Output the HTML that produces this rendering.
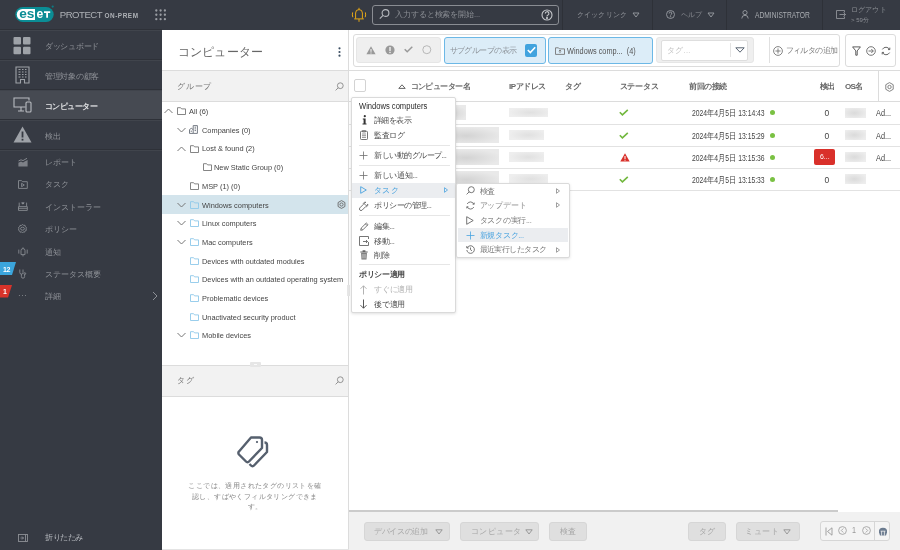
<!DOCTYPE html>
<html><head><meta charset="utf-8">
<style>
*{box-sizing:border-box;margin:0;padding:0}
html,body{width:900px;height:550px;overflow:hidden;background:#fff;font-family:"Liberation Sans",sans-serif;color:#333}
.a{position:absolute}
.t{position:absolute;white-space:nowrap;line-height:1}
#top{left:0;top:0;width:900px;height:30px;background:#363a43}
#side{left:0;top:30px;width:162px;height:520px;background:#363a43}
.cx{display:inline-block;transform-origin:0 50%;transform:scaleX(.86)}
.sep{position:absolute;background:#2e3138}
.stx{position:absolute;left:45px;font-size:7.5px;color:#8f9298;letter-spacing:0px;white-space:nowrap;line-height:1}
</style></head><body><div id="root" style="position:absolute;left:0;top:0;width:900px;height:550px;overflow:hidden;will-change:transform">

<div id="top" class="a">
  <div class="a" style="left:0;top:29px;width:162px;height:1px;background:#2e3138"></div>
  
  <svg class="a" style="left:15px;top:5px" width="42" height="18" viewBox="0 0 42 18">
    <rect x="0.3" y="2" width="38.4" height="15" rx="7.5" fill="#0b8d95"/>
    <path d="M7.3 4 H20 V15 H7.3 A5.5 5.5 0 0 1 7.3 4 Z" fill="#fff"/>
    <text x="4.2" y="12.8" font-family="Liberation Sans" font-weight="bold" font-size="12" fill="#0b8d95" textLength="15.2" lengthAdjust="spacingAndGlyphs">es</text>
    <text x="21.6" y="12.8" font-family="Liberation Sans" font-weight="bold" font-size="12" fill="#fff" textLength="6.8" lengthAdjust="spacingAndGlyphs">e</text>
    <path d="M29 6.3 H35.2 V7.9 H33 V12.8 H31.2 V7.9 H29 Z" fill="#fff"/>
    <circle cx="37.7" cy="1.6" r="1.1" fill="#0b7c84"/>
  </svg>
  <div class="t" style="left:59.8px;top:10.3px;font-size:9.6px;color:#aeb1b6;letter-spacing:-0.5px">PROTECT</div>
  <div class="t" style="left:104.5px;top:12.8px;font-size:6.4px;color:#aeb1b6;font-weight:bold;letter-spacing:0.55px">ON-PREM</div>
  <svg class="a" style="left:154.7px;top:9px" width="12" height="12" viewBox="0 0 12 12" fill="#9a9da3"><circle cx="1.3" cy="1.5" r="1.15"/><circle cx="5.6" cy="1.5" r="1.15"/><circle cx="9.9" cy="1.5" r="1.15"/><circle cx="1.3" cy="5.75" r="1.15"/><circle cx="5.6" cy="5.75" r="1.15"/><circle cx="9.9" cy="5.75" r="1.15"/><circle cx="1.3" cy="10.2" r="1.15"/><circle cx="5.6" cy="10.2" r="1.15"/><circle cx="9.9" cy="10.2" r="1.15"/></svg>
  
  <svg class="a" style="left:351px;top:7px" width="16" height="16" viewBox="0 0 16 16" fill="none" stroke="#f0ae14" stroke-width="0.95"><path d="M4.6 11.6 V6 A3.4 3.4 0 0 1 11.4 6 V11.6 M3.2 11.9 H12.8 M8 12 V14.8 M8 0.8 V2.6"/><path d="M1.6 5.4 Q1 8 1.8 10.2 M14.4 5.4 Q15 8 14.2 10.2"/></svg>
  
  <div class="a" style="left:372px;top:5px;width:187px;height:20px;border:1px solid #8a8d93;border-radius:3px"></div>
  <svg class="a" style="left:379px;top:8px" width="12" height="12" viewBox="0 0 12 12" fill="none" stroke="#b8bbc0" stroke-width="1.1"><circle cx="6.5" cy="5" r="3.4"/><path d="M4.1 7.4 L0.8 10.7"/></svg>
  <div class="t" style="left:395px;top:11px;font-size:7.5px;color:#8c8f95;letter-spacing:-0.1px">入力すると検索を開始...</div>
  <svg class="a" style="left:541px;top:9px" width="12" height="12" viewBox="0 0 12 12" fill="none" stroke="#c5c7cb" stroke-width="1.1"><circle cx="6" cy="6" r="5"/><path d="M4.3 4.6 A1.8 1.8 0 1 1 6.6 6.2 Q6 6.5 6 7.4"/><circle cx="6" cy="9.1" r="0.5" fill="#c5c7cb"/></svg>
  <div class="sep" style="left:562px;top:0;width:1px;height:30px"></div>
  <div class="t" style="left:576.5px;top:11px;font-size:7px;color:#8c8f95;letter-spacing:0.25px">クイックリンク</div>
  <svg class="a" style="left:632px;top:12px" width="8" height="6" viewBox="0 0 8 6" fill="none" stroke="#9a9da3" stroke-width="0.9"><path d="M1 1 H7 L4 5 Z"/></svg>
  <div class="sep" style="left:652px;top:0;width:1px;height:30px"></div>
  <svg class="a" style="left:666px;top:10px" width="9" height="9" viewBox="0 0 9 9" fill="none" stroke="#9a9da3" stroke-width="0.9"><circle cx="4.5" cy="4.5" r="4"/><path d="M3.2 3.5 A1.3 1.3 0 1 1 4.9 4.6 Q4.5 4.9 4.5 5.6"/><circle cx="4.5" cy="6.8" r="0.3"/></svg>
  <div class="t" style="left:681px;top:11px;font-size:7px;color:#8c8f95;letter-spacing:0px">ヘルプ</div>
  <svg class="a" style="left:707px;top:12px" width="8" height="6" viewBox="0 0 8 6" fill="none" stroke="#9a9da3" stroke-width="0.9"><path d="M1 1 H7 L4 5 Z"/></svg>
  <div class="sep" style="left:726px;top:0;width:1px;height:30px"></div>
  <svg class="a" style="left:741px;top:10px" width="8" height="9" viewBox="0 0 8 9" fill="none" stroke="#9a9da3" stroke-width="0.9"><circle cx="4" cy="2.6" r="2.1"/><path d="M0.8 8.5 Q0.8 5.3 4 5.3 Q7.2 5.3 7.2 8.5"/></svg>
  <div class="t" style="left:755px;top:10.5px;font-size:8.7px;color:#a9acb1"><span class="cx" style="transform:scaleX(.77)">ADMINISTRATOR</span></div>
  <div class="sep" style="left:822px;top:0;width:1px;height:30px"></div>
  <svg class="a" style="left:835.5px;top:10px" width="10" height="9" viewBox="0 0 10 9" fill="none" stroke="#9a9da3" stroke-width="0.8"><path d="M8.5 2.5 V0.5 H0.5 V8.5 H8.5 V6.5 M3.5 4.5 H9.5 M7.5 2.5 L9.5 4.5 L7.5 6.5"/></svg>
  <div class="t" style="left:851px;top:6.3px;font-size:7px;color:#8c8f95;letter-spacing:0.15px">ログアウト</div>
  <div class="t" style="left:851px;top:16.8px;font-size:6px;color:#8c8f95">&gt; 59分</div>
</div>


<div id="side" class="a">
  <div class="a" style="left:0;top:60px;width:162px;height:29px;background:#464a52"></div>
  <div class="sep" style="left:0;top:29px;width:162px;height:1px"></div>
  <div class="sep" style="left:0;top:59px;width:162px;height:1px"></div>
  <div class="sep" style="left:0;top:89px;width:162px;height:1px"></div>
  <div class="sep" style="left:0;top:119px;width:162px;height:1px"></div>
  <div class="a" style="left:0;top:0px;width:162px;height:1px;background:#40444c"></div>
  <div class="a" style="left:0;top:30px;width:162px;height:1px;background:#40444c"></div>
  <div class="a" style="left:0;top:60px;width:162px;height:1px;background:#40444c"></div>
  <div class="a" style="left:0;top:90px;width:162px;height:1px;background:#40444c"></div>
  <div class="a" style="left:0;top:120px;width:162px;height:1px;background:#40444c"></div>

  
  <svg class="a" style="left:13px;top:7px" width="19" height="18" viewBox="0 0 19 18" fill="#9ea2a8"><rect x="0.5" y="0" width="7.5" height="7.5" rx="1"/><rect x="10" y="0" width="7.5" height="7.5" rx="1"/><rect x="0.5" y="9.7" width="7.5" height="7.5" rx="1"/><rect x="10" y="9.7" width="7.5" height="7.5" rx="1"/></svg>
  <div class="stx" style="top:12.7px;letter-spacing:-0.3px">ダッシュボード</div>
  <svg class="a" style="left:15px;top:36px" width="15" height="18" viewBox="0 0 15 18" fill="none" stroke="#9ea2a8" stroke-width="1.1"><path d="M1 17 V1 H14 V17 H9.5 V13.5 H5.5 V17 Z"/><path d="M3.5 3.5h2M7 3.5h1.5M10 3.5h1.5M3.5 6h2M7 6h1.5M10 6h1.5M3.5 8.5h2M7 8.5h1.5M10 8.5h1.5M3.5 11h2M7 11h1.5M10 11h1.5" stroke-width="1.2"/></svg>
  <div class="stx" style="top:42.7px;letter-spacing:-0.3px">管理対象の顧客</div>
  <svg class="a" style="left:13px;top:67px" width="19" height="16" viewBox="0 0 19 16" fill="none" stroke="#b9bcc1" stroke-width="1.1"><path d="M12.5 10 H1 V1 H16 V3.5 M5 14 H11 M8 10 V14"/><rect x="13" y="5" width="5" height="10" rx="1"/></svg>
  <div class="stx" style="top:72.7px;color:#e6e7e9;font-weight:bold;letter-spacing:-0.55px">コンピューター</div>
  <svg class="a" style="left:13px;top:96px" width="19" height="17" viewBox="0 0 19 17"><path d="M9.5 0.5 L18.5 16.5 H0.5 Z" fill="#9ea2a8"/><rect x="8.6" y="5.5" width="1.8" height="6" fill="#363a43"/><rect x="8.6" y="12.8" width="1.8" height="1.8" fill="#363a43"/></svg>
  <div class="stx" style="top:102.7px">検出</div>
  <svg class="a" style="left:17.5px;top:127.5px" width="10" height="9" viewBox="0 0 10 9"><path d="M0.5 3 L3 1.8 L5 2.6 L9 0.3" fill="none" stroke="#8d9096" stroke-width="0.9"/><path d="M0.4 8.4 V4.8 L3 3.4 L5 4.4 L7 3.2 L9.6 2 V8.4 Z" fill="#7d8087"/></svg>
  <div class="stx" style="top:128.7px">レポート</div>
  <svg class="a" style="left:17.8px;top:149.5px" width="10" height="9" viewBox="0 0 10 9" fill="none" stroke="#8d9096" stroke-width="0.85"><path d="M0.5 0.6 H3.5 L4.5 1.7 H9.3 V8.4 H0.5 Z M3.6 3.3 L6.3 5 L3.6 6.7 Z"/></svg>
  <div class="stx" style="top:150.7px">タスク</div>
  <svg class="a" style="left:17.8px;top:172px" width="10" height="9" viewBox="0 0 10 9" fill="none" stroke="#8d9096" stroke-width="0.85"><path d="M1.2 4.2 V0.6 M8.6 4.2 V0.6 M0.5 4.6 H9.3 V8.4 H0.5 Z M0.5 6.3 H9.3"/><path d="M3.6 0.8 H6.2 L4.9 2.2 Z" fill="#8d9096"/></svg>
  <div class="stx" style="top:173.7px">インストーラー</div>
  <svg class="a" style="left:17.8px;top:193.8px" width="9" height="9" viewBox="0 0 9 9" fill="none" stroke="#8d9096" stroke-width="0.85"><path d="M4.5 0.5 L5.6 1.3 L7 1.3 L7.3 2.7 L8.5 3.6 L8 4.9 L8.4 6.3 L7.1 6.9 L6.5 8.2 L5.1 8 L4.5 8.6 L3.6 8 L2.2 8.2 L1.7 6.9 L0.5 6.2 L0.9 4.8 L0.5 3.5 L1.6 2.8 L2 1.4 L3.4 1.4 Z"/><ellipse cx="4.5" cy="4.7" rx="1.9" ry="1.5"/></svg>
  <div class="stx" style="top:195.7px">ポリシー</div>
  <svg class="a" style="left:17.8px;top:216.5px" width="10" height="10" viewBox="0 0 10 10" fill="none" stroke="#8d9096" stroke-width="0.85"><path d="M3 7.6 V3.6 A2 2 0 0 1 7 3.6 V7.6 Z M5 0.4 V1.6 M4.3 8.8 H5.7 M0.8 2.6 V6.6 M9.2 2.6 V6.6"/></svg>
  <div class="stx" style="top:218.7px">通知</div>
  <svg class="a" style="left:19px;top:238.5px" width="8" height="10" viewBox="0 0 8 10" fill="none" stroke="#8d9096" stroke-width="0.85"><path d="M0.8 0.5 V3.5 A1.6 1.6 0 0 0 4 3.5 V0.5 M2.4 5.1 V7.6 A1.6 1.6 0 0 0 5.6 7.6 V5.6"/><circle cx="5.8" cy="4.6" r="0.9"/></svg>
  <div class="stx" style="top:240.7px">ステータス概要</div>
  <div class="t" style="left:18px;top:262px;font-size:8px;color:#8d9096;letter-spacing:0.5px">···</div>
  <div class="stx" style="top:262.7px">詳細</div>
  <svg class="a" style="left:152px;top:261px" width="6" height="10" viewBox="0 0 6 10" fill="none" stroke="#8d9096" stroke-width="1"><path d="M1 1 L5 5 L1 9"/></svg>
  
  <svg class="a" style="left:0;top:232px" width="16" height="13" viewBox="0 0 16 13"><path d="M0 0 H16 L12 13 H0 Z" fill="#3ba5dc"/></svg>
  <div class="t" style="left:3px;top:235.5px;font-size:7px;color:#fff;font-weight:bold;letter-spacing:-0.3px">12</div>
  <svg class="a" style="left:0;top:255px" width="13" height="12.5" viewBox="0 0 13 12.5"><path d="M0 0 H12 L8 12.5 H0 Z" fill="#d8332a"/></svg>
  <div class="t" style="left:3px;top:257.5px;font-size:7px;color:#fff;font-weight:bold">1</div>
  <svg class="a" style="left:18px;top:504px" width="10" height="8" viewBox="0 0 10 8" fill="none" stroke="#8d9096" stroke-width="0.9"><rect x="0.5" y="0.5" width="9" height="7"/><path d="M7.5 0.5 V7.5 M2.5 4 H5.5 M4 2.5 L5.5 4 L4 5.5"/></svg>
  <div class="stx" style="top:503.7px;color:#b9bcc1;letter-spacing:-0.5px">折りたたみ</div>
</div>


<div class="a" style="left:162px;top:30px;width:187px;height:520px;background:#fff;border-right:1px solid #dcdcdc">
  <div class="t" style="left:16px;top:16px;font-size:12px;color:#666;letter-spacing:0.15px">コンピューター</div>
  <svg class="a" style="left:176px;top:17px" width="3" height="10" viewBox="0 0 3 10" fill="#3d4f63"><circle cx="1.5" cy="1.3" r="1.1"/><circle cx="1.5" cy="5" r="1.1"/><circle cx="1.5" cy="8.7" r="1.1"/></svg>
  <div class="a" style="left:0;top:40px;width:186px;height:32px;background:#f2f2f2;border-top:1px solid #dcdcdc;border-bottom:1px solid #dcdcdc"></div>
  <div class="t" style="left:15px;top:52.8px;font-size:8px;color:#777;letter-spacing:0.8px">グループ</div>
  <svg class="a" style="left:2.4px;top:78.1px" width="9" height="6" viewBox="0 0 9 6" fill="none" stroke="#777" stroke-width="1"><path d="M0.5 5 L4.5 1 L8.5 5"/></svg>
  <svg class="a" style="left:15.3px;top:77.1px" width="9" height="8" viewBox="0 0 9 8" fill="none" stroke="#777" stroke-width="0.9"><path d="M0.5 0.7 H3.6 L4.6 1.9 H8.5 V7.5 H0.5 Z"/></svg>
  <div class="t" style="left:27.0px;top:78.0px;font-size:8.1px;color:#444"><span class="cx" style="transform:scaleX(.915)">All (6)</span></div>
  <svg class="a" style="left:15.0px;top:96.8px" width="9" height="6" viewBox="0 0 9 6" fill="none" stroke="#777" stroke-width="1"><path d="M0.5 1 L4.5 5 L8.5 1"/></svg>
  <svg class="a" style="left:27.3px;top:95.3px" width="9" height="9" viewBox="0 0 9 9" fill="none" stroke="#5f6670" stroke-width="0.85"><path d="M4.2 8.4 V0.6 H8.4 V8.4 Z M5.6 2.2 H7 M5.6 3.9 H7 M5.6 5.6 H7 M0.5 8.4 V4.6 L2.3 3.3 L4.2 4.6 M0.5 8.4 H4.2 M1.6 6.2 H3"/></svg>
  <div class="t" style="left:39.6px;top:96.7px;font-size:8.1px;color:#444"><span class="cx" style="transform:scaleX(.915)">Companies (0)</span></div>
  <svg class="a" style="left:15.0px;top:115.5px" width="9" height="6" viewBox="0 0 9 6" fill="none" stroke="#777" stroke-width="1"><path d="M0.5 5 L4.5 1 L8.5 5"/></svg>
  <svg class="a" style="left:27.9px;top:114.5px" width="9" height="8" viewBox="0 0 9 8" fill="none" stroke="#777" stroke-width="0.9"><path d="M0.5 0.7 H3.6 L4.6 1.9 H8.5 V7.5 H0.5 Z"/></svg>
  <div class="t" style="left:39.6px;top:115.4px;font-size:8.1px;color:#444"><span class="cx" style="transform:scaleX(.915)">Lost &amp; found (2)</span></div>
  <svg class="a" style="left:40.5px;top:133.2px" width="9" height="8" viewBox="0 0 9 8" fill="none" stroke="#777" stroke-width="0.9"><path d="M0.5 0.7 H3.6 L4.6 1.9 H8.5 V7.5 H0.5 Z"/></svg>
  <div class="t" style="left:52.2px;top:134.1px;font-size:8.1px;color:#444"><span class="cx" style="transform:scaleX(.915)">New Static Group (0)</span></div>
  <svg class="a" style="left:27.9px;top:151.9px" width="9" height="8" viewBox="0 0 9 8" fill="none" stroke="#777" stroke-width="0.9"><path d="M0.5 0.7 H3.6 L4.6 1.9 H8.5 V7.5 H0.5 Z"/></svg>
  <div class="t" style="left:39.6px;top:152.8px;font-size:8.1px;color:#444"><span class="cx" style="transform:scaleX(.915)">MSP (1) (0)</span></div>
  <div class="a" style="left:0;top:165.2px;width:186px;height:18.5px;background:#d3e4ec"></div>
  <svg class="a" style="left:174.5px;top:170.1px" width="9" height="9" viewBox="0 0 9 9" fill="none" stroke="#666" stroke-width="0.9"><path d="M4.5 0.6 L7.9 2.5 V6.5 L4.5 8.4 L1.1 6.5 V2.5 Z"/><circle cx="4.5" cy="4.5" r="1.6"/></svg>
  <svg class="a" style="left:15.0px;top:171.6px" width="9" height="6" viewBox="0 0 9 6" fill="none" stroke="#777" stroke-width="1"><path d="M0.5 1 L4.5 5 L8.5 1"/></svg>
  <svg class="a" style="left:27.9px;top:170.6px" width="9" height="8" viewBox="0 0 9 8" fill="none" stroke="#8fc8ea" stroke-width="0.9"><path d="M0.5 0.7 H3.6 L4.6 1.9 H8.5 V7.5 H0.5 Z"/></svg>
  <div class="t" style="left:39.6px;top:171.5px;font-size:8.1px;color:#444"><span class="cx" style="transform:scaleX(.915)">Windows computers</span></div>
  <svg class="a" style="left:15.0px;top:190.2px" width="9" height="6" viewBox="0 0 9 6" fill="none" stroke="#777" stroke-width="1"><path d="M0.5 1 L4.5 5 L8.5 1"/></svg>
  <svg class="a" style="left:27.9px;top:189.2px" width="9" height="8" viewBox="0 0 9 8" fill="none" stroke="#8fc8ea" stroke-width="0.9"><path d="M0.5 0.7 H3.6 L4.6 1.9 H8.5 V7.5 H0.5 Z"/></svg>
  <div class="t" style="left:39.6px;top:190.1px;font-size:8.1px;color:#444"><span class="cx" style="transform:scaleX(.915)">Linux computers</span></div>
  <svg class="a" style="left:15.0px;top:208.9px" width="9" height="6" viewBox="0 0 9 6" fill="none" stroke="#777" stroke-width="1"><path d="M0.5 1 L4.5 5 L8.5 1"/></svg>
  <svg class="a" style="left:27.9px;top:207.9px" width="9" height="8" viewBox="0 0 9 8" fill="none" stroke="#8fc8ea" stroke-width="0.9"><path d="M0.5 0.7 H3.6 L4.6 1.9 H8.5 V7.5 H0.5 Z"/></svg>
  <div class="t" style="left:39.6px;top:208.8px;font-size:8.1px;color:#444"><span class="cx" style="transform:scaleX(.915)">Mac computers</span></div>
  <svg class="a" style="left:27.9px;top:226.6px" width="9" height="8" viewBox="0 0 9 8" fill="none" stroke="#8fc8ea" stroke-width="0.9"><path d="M0.5 0.7 H3.6 L4.6 1.9 H8.5 V7.5 H0.5 Z"/></svg>
  <div class="t" style="left:39.6px;top:227.5px;font-size:8.1px;color:#444"><span class="cx" style="transform:scaleX(.915)">Devices with outdated modules</span></div>
  <svg class="a" style="left:27.9px;top:245.3px" width="9" height="8" viewBox="0 0 9 8" fill="none" stroke="#8fc8ea" stroke-width="0.9"><path d="M0.5 0.7 H3.6 L4.6 1.9 H8.5 V7.5 H0.5 Z"/></svg>
  <div class="t" style="left:39.6px;top:246.2px;font-size:8.1px;color:#444"><span class="cx" style="transform:scaleX(.915)">Devices with an outdated operating system</span></div>
  <svg class="a" style="left:27.9px;top:264.0px" width="9" height="8" viewBox="0 0 9 8" fill="none" stroke="#8fc8ea" stroke-width="0.9"><path d="M0.5 0.7 H3.6 L4.6 1.9 H8.5 V7.5 H0.5 Z"/></svg>
  <div class="t" style="left:39.6px;top:264.9px;font-size:8.1px;color:#444"><span class="cx" style="transform:scaleX(.915)">Problematic devices</span></div>
  <svg class="a" style="left:27.9px;top:282.7px" width="9" height="8" viewBox="0 0 9 8" fill="none" stroke="#8fc8ea" stroke-width="0.9"><path d="M0.5 0.7 H3.6 L4.6 1.9 H8.5 V7.5 H0.5 Z"/></svg>
  <div class="t" style="left:39.6px;top:283.6px;font-size:8.1px;color:#444"><span class="cx" style="transform:scaleX(.915)">Unactivated security product</span></div>
  <svg class="a" style="left:15.0px;top:302.4px" width="9" height="6" viewBox="0 0 9 6" fill="none" stroke="#777" stroke-width="1"><path d="M0.5 1 L4.5 5 L8.5 1"/></svg>
  <svg class="a" style="left:27.9px;top:301.4px" width="9" height="8" viewBox="0 0 9 8" fill="none" stroke="#8fc8ea" stroke-width="0.9"><path d="M0.5 0.7 H3.6 L4.6 1.9 H8.5 V7.5 H0.5 Z"/></svg>
  <div class="t" style="left:39.6px;top:302.3px;font-size:8.1px;color:#444"><span class="cx" style="transform:scaleX(.915)">Mobile devices</span></div>
  <svg class="a" style="left:173px;top:52px" width="9" height="9" viewBox="0 0 9 9" fill="none" stroke="#888" stroke-width="0.9"><circle cx="5.3" cy="3.7" r="2.9"/><path d="M3.2 5.8 L0.6 8.4"/></svg>
</div>


<div class="a" style="left:349px;top:30px;width:551px;height:520px;background:#fff">
  
  <div class="a" style="left:4px;top:4.2px;width:487px;height:32.6px;border:1px solid #dcdcdc;border-radius:3px;background:#fff"></div>
  <div class="a" style="left:7px;top:7px;width:85px;height:26px;background:#efefef;border-radius:3px;border:1px solid #e6e6e6"></div>
  <svg class="a" style="left:17px;top:15.8px" width="10" height="9" viewBox="0 0 10 9"><path d="M5 0.2 L9.6 8.2 H0.4 Z" fill="#999"/><rect x="4.45" y="3" width="1.1" height="2.8" fill="#efefef"/><rect x="4.45" y="6.5" width="1.1" height="1" fill="#efefef"/></svg>
  <svg class="a" style="left:35.5px;top:14.7px" width="10" height="10" viewBox="0 0 10 10"><circle cx="5" cy="5" r="4.6" fill="#999"/><rect x="4.3" y="2" width="1.4" height="4" fill="#efefef"/><rect x="4.3" y="6.8" width="1.4" height="1.3" fill="#efefef"/></svg>
  <svg class="a" style="left:54.5px;top:16.4px" width="9" height="7" viewBox="0 0 9 7" fill="none" stroke="#999" stroke-width="1.5"><path d="M0.7 3.3 L3.2 5.8 L8.3 0.7"/></svg>
  <svg class="a" style="left:72.5px;top:15px" width="10" height="10" viewBox="0 0 10 10" fill="none" stroke="#aaa" stroke-width="0.8"><circle cx="4.8" cy="4.7" r="4"/></svg>
  <div class="a" style="left:95px;top:7px;width:102px;height:26.5px;background:#dcedf8;border:1px solid #6cb8e6;border-radius:3px"></div>
  <div class="t" style="left:100.5px;top:17px;font-size:7.5px;color:#8c9298;letter-spacing:-0.55px">サブグループの表示</div>
  <div class="a" style="left:176px;top:14px;width:12px;height:12.5px;background:#41a3de;border-radius:2px"></div>
  <svg class="a" style="left:177.5px;top:16px" width="9" height="8" viewBox="0 0 9 8" fill="none" stroke="#fff" stroke-width="1.6"><path d="M0.8 4 L3.3 6.5 L8.2 1.2"/></svg>
  <div class="a" style="left:199px;top:7px;width:105px;height:26.5px;background:#dcedf8;border:1px solid #6cb8e6;border-radius:3px"></div>
  <svg class="a" style="left:205.5px;top:17px" width="10" height="8" viewBox="0 0 10 8" fill="none" stroke="#777" stroke-width="0.9"><path d="M0.5 0.8 H3.5 L4.5 1.9 H9.5 V7.4 H0.5 Z M5 3 V6 M3.8 4.2 L5 3 L6.2 4.2"/></svg>
  <div class="t" style="left:217.5px;top:17px;font-size:8.5px;color:#555"><span class="cx">Windows comp...&nbsp; (4)</span></div>
  <div class="a" style="left:307px;top:7px;width:98px;height:26px;background:#efefef;border-radius:3px;border:1px solid #e6e6e6"></div>
  <div class="a" style="left:312px;top:10px;width:86.5px;height:20.5px;background:#fff;border:1px solid #dedede;border-radius:2px"></div>
  <div class="t" style="left:318px;top:17px;font-size:7.5px;color:#c4c4c4;letter-spacing:0.3px">タグ...</div>
  <div class="a" style="left:380.5px;top:13px;width:1px;height:14px;background:#e3e3e3"></div>
  <svg class="a" style="left:385.5px;top:17.3px" width="10" height="6" viewBox="0 0 10 6" fill="none" stroke="#5a6573" stroke-width="1"><path d="M0.8 0.8 H9.2 L5 5.2 Z"/></svg>
  <div class="a" style="left:420px;top:7px;width:1px;height:26px;background:#e0e0e0"></div>
  <svg class="a" style="left:424px;top:15.5px" width="10" height="10" viewBox="0 0 10 10" fill="none" stroke="#777" stroke-width="0.9"><circle cx="5" cy="5" r="4.4"/><path d="M5 2.4 V7.6 M2.4 5 H7.6"/></svg>
  <div class="t" style="left:436.5px;top:16.5px;font-size:7.5px;color:#7a7a7a;letter-spacing:-0.6px">フィルタの追加</div>
  
  <div class="a" style="left:496px;top:4.2px;width:50.5px;height:32.6px;border:1px solid #dcdcdc;border-radius:3px;background:#fff"></div>
  <svg class="a" style="left:502.5px;top:15.5px" width="9" height="10" viewBox="0 0 9 10" fill="none" stroke="#555" stroke-width="0.95"><path d="M0.6 0.9 H8.4 L5.2 4.9 V9.2 H3.8 V4.9 Z"/></svg>
  <svg class="a" style="left:517px;top:15.5px" width="10" height="10" viewBox="0 0 10 10" fill="none" stroke="#666" stroke-width="0.9"><circle cx="5" cy="5" r="4.3"/><path d="M2.5 5 H7.3 M5.3 3 L7.3 5 L5.3 7"/></svg>
  <svg class="a" style="left:532px;top:15.5px" width="10" height="10" viewBox="0 0 10 10" fill="none" stroke="#666" stroke-width="1"><path d="M8.6 3.6 A4 4 0 0 0 1.4 3.4 M1.4 6.4 A4 4 0 0 0 8.6 6.6 M7 3.6 H8.8 V1.6 M3 6.4 H1.2 V8.4"/></svg>
  
  <div class="a" style="left:0;top:40px;width:551px;height:1px;background:#dcdcdc"></div>
  <div class="a" style="left:0;top:71px;width:551px;height:1px;background:#dcdcdc"></div>
  <div class="a" style="left:4.8px;top:49.3px;width:12px;height:12.5px;border:1px solid #d3d3d3;border-radius:2px;background:#fff"></div>
  <svg class="a" style="left:49px;top:53.5px" width="8" height="5" viewBox="0 0 8 5" fill="none" stroke="#555" stroke-width="0.9"><path d="M0.8 4.4 H7.2 L4 0.8 Z"/></svg>
  <div class="t" style="left:61.5px;top:53px;font-size:7.5px;color:#666;font-weight:bold;letter-spacing:-0.55px">コンピューター名</div>
  <div class="t" style="left:160px;top:53px;font-size:8px;color:#666;font-weight:bold;letter-spacing:-0.45px">IPアドレス</div>
  <div class="t" style="left:216px;top:53px;font-size:8px;color:#666;font-weight:bold;letter-spacing:-0.25px">タグ</div>
  <div class="t" style="left:270.5px;top:53px;font-size:8px;color:#666;font-weight:bold;letter-spacing:-0.25px">ステータス</div>
  <div class="t" style="left:340px;top:53px;font-size:8px;color:#666;font-weight:bold;letter-spacing:-0.45px">前回の接続</div>
  <div class="t" style="left:471px;top:53px;font-size:8px;color:#666;font-weight:bold;letter-spacing:-0.75px">検出</div>
  <div class="t" style="left:496px;top:53px;font-size:8px;color:#666;font-weight:bold;letter-spacing:-0.75px">OS名</div>
  <div class="a" style="left:528.5px;top:41px;width:1px;height:30px;background:#dcdcdc"></div>
  <svg class="a" style="left:536px;top:51.5px" width="9" height="10" viewBox="0 0 9 10" fill="none" stroke="#777" stroke-width="0.9"><path d="M4.5 0.6 L8.2 2.7 V7.3 L4.5 9.4 L0.8 7.3 V2.7 Z"/><circle cx="4.5" cy="5" r="1.7"/></svg>
<div class="a" style="left:0;top:93.8px;width:551px;height:1px;background:#e2e2e2"></div>
  <div class="a" style="left:90px;top:74.8px;width:27.0px;height:15.6px;background:radial-gradient(ellipse 60% 55% at 45% 55%,#d3d3d3,#e9e9e9)"></div>
  <div class="a" style="left:159.9px;top:77.8px;width:39.1px;height:9.6px;background:radial-gradient(ellipse 55% 60% at 55% 50%,#e0e0e0,#eeeeee)"></div>
  <svg class="a" style="left:269.7px;top:79.4px" width="10" height="7" viewBox="0 0 10 7" fill="none" stroke="#72b83e" stroke-width="1.6"><path d="M0.8 3.3 L3.4 5.9 L8.8 0.8"/></svg>
  <div class="t" style="left:342.5px;top:79.3px;font-size:8.5px;color:#444"><span class="cx" style="transform:scaleX(.8)">2024年4月5日 13:14:43</span></div>
  <div class="a" style="left:421.3px;top:80.3px;width:5px;height:5px;border-radius:50%;background:#7ac143"></div>
  <div class="t" style="left:475.5px;top:79.3px;font-size:8.5px;color:#444">0</div>
  <div class="a" style="left:495.8px;top:77.7px;width:21px;height:10px;background:radial-gradient(ellipse 60% 60% at 45% 50%,#dadada,#ededed)"></div>
  <div class="t" style="left:526.5px;top:79.3px;font-size:8.5px;color:#444"><span class="cx">Ad...</span></div>
  <div class="a" style="left:0;top:116.0px;width:551px;height:1px;background:#e2e2e2"></div>
  <div class="a" style="left:90px;top:97.0px;width:60.0px;height:15.6px;background:radial-gradient(ellipse 60% 55% at 45% 55%,#d3d3d3,#e9e9e9)"></div>
  <div class="a" style="left:159.9px;top:100.0px;width:35.4px;height:9.6px;background:radial-gradient(ellipse 55% 60% at 55% 50%,#e0e0e0,#eeeeee)"></div>
  <svg class="a" style="left:269.7px;top:101.6px" width="10" height="7" viewBox="0 0 10 7" fill="none" stroke="#72b83e" stroke-width="1.6"><path d="M0.8 3.3 L3.4 5.9 L8.8 0.8"/></svg>
  <div class="t" style="left:342.5px;top:101.5px;font-size:8.5px;color:#444"><span class="cx" style="transform:scaleX(.8)">2024年4月5日 13:15:29</span></div>
  <div class="a" style="left:421.3px;top:102.5px;width:5px;height:5px;border-radius:50%;background:#7ac143"></div>
  <div class="t" style="left:475.5px;top:101.5px;font-size:8.5px;color:#444">0</div>
  <div class="a" style="left:495.8px;top:99.9px;width:21px;height:10px;background:radial-gradient(ellipse 60% 60% at 45% 50%,#dadada,#ededed)"></div>
  <div class="t" style="left:526.5px;top:101.5px;font-size:8.5px;color:#444"><span class="cx">Ad...</span></div>
  <div class="a" style="left:0;top:138.2px;width:551px;height:1px;background:#e2e2e2"></div>
  <div class="a" style="left:90px;top:119.2px;width:60.0px;height:15.6px;background:radial-gradient(ellipse 60% 55% at 45% 55%,#d3d3d3,#e9e9e9)"></div>
  <div class="a" style="left:159.9px;top:122.2px;width:35.4px;height:9.6px;background:radial-gradient(ellipse 55% 60% at 55% 50%,#e0e0e0,#eeeeee)"></div>
  <svg class="a" style="left:270.5px;top:122.6px" width="10" height="9" viewBox="0 0 10 9"><path d="M5 0.2 L9.7 8.6 H0.3 Z" fill="#d9302a"/><rect x="4.5" y="3" width="1" height="3" fill="#fff"/><rect x="4.5" y="6.7" width="1" height="1" fill="#fff"/></svg>
  <div class="t" style="left:342.5px;top:123.7px;font-size:8.5px;color:#444"><span class="cx" style="transform:scaleX(.8)">2024年4月5日 13:15:36</span></div>
  <div class="a" style="left:421.3px;top:124.7px;width:5px;height:5px;border-radius:50%;background:#7ac143"></div>
  <div class="a" style="left:464.5px;top:119.1px;width:21px;height:16px;background:#d9302a;border-radius:2px"></div>
  <div class="t" style="left:470.5px;top:123.1px;font-size:8px;color:#fff"><span class="cx">6...</span></div>
  <div class="a" style="left:495.8px;top:122.1px;width:21px;height:10px;background:radial-gradient(ellipse 60% 60% at 45% 50%,#dadada,#ededed)"></div>
  <div class="t" style="left:526.5px;top:123.7px;font-size:8.5px;color:#444"><span class="cx">Ad...</span></div>
  <div class="a" style="left:0;top:160.4px;width:551px;height:1px;background:#e2e2e2"></div>
  <div class="a" style="left:90px;top:141.4px;width:60.0px;height:15.6px;background:radial-gradient(ellipse 60% 55% at 45% 55%,#d3d3d3,#e9e9e9)"></div>
  <div class="a" style="left:159.9px;top:144.4px;width:39.1px;height:9.6px;background:radial-gradient(ellipse 55% 60% at 55% 50%,#e0e0e0,#eeeeee)"></div>
  <svg class="a" style="left:269.7px;top:146.0px" width="10" height="7" viewBox="0 0 10 7" fill="none" stroke="#72b83e" stroke-width="1.6"><path d="M0.8 3.3 L3.4 5.9 L8.8 0.8"/></svg>
  <div class="t" style="left:342.5px;top:145.9px;font-size:8.5px;color:#444"><span class="cx" style="transform:scaleX(.8)">2024年4月5日 13:15:33</span></div>
  <div class="a" style="left:421.3px;top:146.9px;width:5px;height:5px;border-radius:50%;background:#7ac143"></div>
  <div class="t" style="left:475.5px;top:145.9px;font-size:8.5px;color:#444">0</div>
  <div class="a" style="left:495.8px;top:144.3px;width:21px;height:10px;background:radial-gradient(ellipse 60% 60% at 45% 50%,#dadada,#ededed)"></div>
  
  <div class="a" style="left:0;top:479.5px;width:489px;height:2px;background:#cbcbcb"></div>
  <div class="a" style="left:0;top:482px;width:551px;height:38px;background:#f1f1f1"></div>
  <div class="a" style="left:15px;top:491.5px;width:86px;height:19px;background:#dfdfdf;border:1px solid #d6d6d6;border-radius:3px"></div>
  <div class="t" style="left:25px;top:498px;font-size:7.5px;color:#a6a6a6;letter-spacing:-0.35px">デバイスの追加</div>
  <svg class="a" style="left:86px;top:498.5px" width="8" height="6" viewBox="0 0 8 6" fill="none" stroke="#999" stroke-width="1"><path d="M0.8 0.8 H7.2 L4 5 Z"/></svg>
  <div class="a" style="left:111px;top:491.5px;width:78.5px;height:19px;background:#dfdfdf;border:1px solid #d6d6d6;border-radius:3px"></div>
  <div class="t" style="left:122px;top:498px;font-size:7.5px;color:#a6a6a6;letter-spacing:0.4px">コンピュータ</div>
  <svg class="a" style="left:176px;top:498.5px" width="8" height="6" viewBox="0 0 8 6" fill="none" stroke="#999" stroke-width="1"><path d="M0.8 0.8 H7.2 L4 5 Z"/></svg>
  <div class="a" style="left:200px;top:491.5px;width:37.5px;height:19px;background:#dfdfdf;border:1px solid #d6d6d6;border-radius:3px"></div>
  <div class="t" style="left:211px;top:498px;font-size:7.5px;color:#a6a6a6">検査</div>
  <div class="a" style="left:339px;top:491.5px;width:37.5px;height:19px;background:#dfdfdf;border:1px solid #d6d6d6;border-radius:3px"></div>
  <div class="t" style="left:350px;top:498px;font-size:7.5px;color:#a6a6a6">タグ</div>
  <div class="a" style="left:387px;top:491.5px;width:63.5px;height:19px;background:#dfdfdf;border:1px solid #d6d6d6;border-radius:3px"></div>
  <div class="t" style="left:396px;top:498px;font-size:7.5px;color:#a6a6a6;letter-spacing:0.6px">ミュート</div>
  <svg class="a" style="left:434px;top:498.5px" width="8" height="6" viewBox="0 0 8 6" fill="none" stroke="#999" stroke-width="1"><path d="M0.8 0.8 H7.2 L4 5 Z"/></svg>
  <div class="a" style="left:471px;top:491px;width:69.5px;height:19.5px;background:#f4f4f4;border:1px solid #d6d6d6;border-radius:3px"></div>
  <div class="a" style="left:525px;top:492px;width:1px;height:18px;background:#d6d6d6"></div>
  <svg class="a" style="left:476px;top:496.5px" width="8" height="9" viewBox="0 0 8 9" fill="none" stroke="#999" stroke-width="0.9"><path d="M1 0.5 V8.5 M7 0.8 L2.5 4.5 L7 8.2 Z"/></svg>
  <svg class="a" style="left:489px;top:496.3px" width="9" height="9" viewBox="0 0 9 9" fill="none" stroke="#999" stroke-width="0.8"><circle cx="4.5" cy="4.5" r="3.9"/><path d="M5.3 2.5 L3.3 4.5 L5.3 6.5"/></svg>
  <div class="t" style="left:502.5px;top:496.3px;font-size:9px;color:#999"><span class="cx" style="transform:scaleX(.8)">1</span></div>
  <svg class="a" style="left:512.5px;top:496.3px" width="9" height="9" viewBox="0 0 9 9" fill="none" stroke="#999" stroke-width="0.8"><circle cx="4.5" cy="4.5" r="3.9"/><path d="M3.7 2.5 L5.7 4.5 L3.7 6.5"/></svg>
  <svg class="a" style="left:528.5px;top:496.5px" width="10" height="9" viewBox="0 0 10 9"><path d="M1 5.5 Q0.3 1 5 0.8 Q9.7 1 9 5.5 L8 8.6 H2 Z" fill="#6b7b8f"/><path d="M2.6 4.2 H7.4 M3.6 4.2 V8.6 M6.4 4.2 V8.6" stroke="#f3f3f3" stroke-width="0.8" fill="none"/></svg>
</div>


<div class="a" style="left:162px;top:365px;width:186px;height:32px;background:#f2f2f2;border-top:1px solid #dcdcdc;border-bottom:1px solid #dcdcdc"></div>
<div class="a" style="left:249.5px;top:362px;width:11px;height:4.5px;background:#e6e6e6;border-radius:1px"></div>
<div class="a" style="left:253.5px;top:363.5px;width:3px;height:1.5px;background:#fafafa"></div>
<div class="t" style="left:177px;top:376.5px;font-size:8px;color:#777;letter-spacing:0.8px">タグ</div>
<svg class="a" style="left:335px;top:376px" width="9" height="9" viewBox="0 0 9 9" fill="none" stroke="#888" stroke-width="0.9"><circle cx="5.3" cy="3.7" r="2.9"/><path d="M3.2 5.8 L0.6 8.4"/></svg>
<svg class="a" style="left:237px;top:435px" width="34" height="34" viewBox="0 0 34 34" fill="none" stroke="#56606e" stroke-width="2.4" stroke-linejoin="round"><path d="M14 2.5 H22.5 A2.5 2.5 0 0 1 25 5 V13 L12 26.5 A2 2 0 0 1 9 26.5 L2 19.5 A2 2 0 0 1 2 16.5 Z"/><path d="M27.5 7.5 A2.5 2.5 0 0 1 30 10 V17 L17 30.5 A2 2 0 0 1 14 30.5 L12.5 29"/><circle cx="20" cy="7" r="0.7" fill="#56606e" stroke-width="1"/></svg>
<div class="a" style="left:162px;top:480.9px;width:186px;text-align:center;font-size:7px;line-height:10.7px;color:#888;letter-spacing:0.4px;white-space:nowrap">ここでは、適用されたタグのリストを確<br>認し、すばやくフィルタリングできま<br>す。</div>
<div class="a" style="left:347px;top:285px;width:2.5px;height:11px;background:#e6e6e6"></div>
<div class="a" style="left:162px;top:549px;width:187px;height:1px;background:#e4e4e4"></div>


<div class="a" style="left:351px;top:97px;width:105px;height:215.5px;background:#fff;border:1px solid #dadada;border-radius:2px;box-shadow:0 1px 3px rgba(0,0,0,0.12)"></div>
<div class="t" style="left:358.5px;top:102.3px;font-size:8.4px;color:#2a2a2a"><span class="cx" style="transform:scaleX(.905)">Windows computers</span></div>
<svg class="a" style="left:361.5px;top:calc(120.4px - 5px)" width="5" height="10" viewBox="0 0 5 10" fill="#333"><circle cx="2.8" cy="1.2" r="1.1"/><path d="M0.8 3.6 H3.6 V8.6 H4.5 V9.6 H0.5 V8.6 H1.6 V4.6 H0.8 Z"/></svg>
<div class="t" style="left:374px;top:117.2px;font-size:7.5px;color:#4d4d4d;letter-spacing:-0.6px">詳細を表示</div>
<svg class="a" style="left:360px;top:calc(135.0px - 5px)" width="8" height="10" viewBox="0 0 8 10" fill="none" stroke="#666" stroke-width="0.9"><rect x="0.5" y="1.3" width="7" height="8.2" rx="0.8"/><path d="M2.5 0.5 H5.5 V2 H2.5 Z M2 4 H6 M2 5.7 H6 M2 7.4 H6" stroke-width="0.7"/></svg>
<div class="t" style="left:374px;top:131.8px;font-size:7.5px;color:#4d4d4d;letter-spacing:-0.5px">監査ログ</div>
<div class="a" style="left:358.5px;top:145px;width:91px;height:1px;background:#e6e6e6"></div>
<svg class="a" style="left:359px;top:calc(155.0px - 4.5px)" width="9" height="9" viewBox="0 0 9 9" stroke="#707070" stroke-width="0.8"><path d="M4.5 0.5 V8.5 M0.5 4.5 H8.5"/></svg>
<div class="t" style="left:374px;top:151.8px;font-size:7.5px;color:#4d4d4d;letter-spacing:-0.50px">新しい動的グループ...</div>
<div class="a" style="left:358.5px;top:165px;width:91px;height:1px;background:#e6e6e6"></div>
<svg class="a" style="left:359px;top:calc(175.4px - 4.5px)" width="9" height="9" viewBox="0 0 9 9" stroke="#707070" stroke-width="0.8"><path d="M4.5 0.5 V8.5 M0.5 4.5 H8.5"/></svg>
<div class="t" style="left:374px;top:172.2px;font-size:7.5px;color:#4d4d4d;letter-spacing:-0.35px">新しい通知...</div>
<div class="a" style="left:352px;top:183px;width:103px;height:14.6px;background:#ebedf0"></div>
<svg class="a" style="left:360px;top:calc(190.4px - 4px)" width="7" height="8" viewBox="0 0 7 8" fill="none" stroke="#4aa3df" stroke-width="0.9"><path d="M0.7 0.7 L6.3 4 L0.7 7.3 Z"/></svg>
<div class="t" style="left:374px;top:187.2px;font-size:7.5px;color:#4aa3df;letter-spacing:0.35px">タスク</div>
<svg class="a" style="left:443.5px;top:187px" width="4" height="6" viewBox="0 0 4 6" fill="none" stroke="#4aa3df" stroke-width="0.8"><path d="M0.5 0.7 L3.5 3 L0.5 5.3 Z"/></svg>
<svg class="a" style="left:359px;top:200.5px" width="10" height="10" viewBox="0 0 10 10" fill="none" stroke="#666" stroke-width="0.85"><g transform="rotate(45 5 5)"><path d="M3.6 1 V3.2 H6.4 V1 A2.2 2.2 0 0 1 7.2 3.8 L6.6 4.4 V9.2 A1.1 1.1 0 0 1 3.4 9.2 V4.4 L2.8 3.8 A2.2 2.2 0 0 1 3.6 1 Z"/></g></svg>
<div class="t" style="left:374px;top:202.0px;font-size:7.5px;color:#4d4d4d;letter-spacing:-0.50px">ポリシーの管理...</div>
<div class="a" style="left:358.5px;top:214.5px;width:91px;height:1px;background:#e6e6e6"></div>
<svg class="a" style="left:359.5px;top:221.6px" width="9" height="9" viewBox="0 0 9 9" fill="none" stroke="#606060" stroke-width="0.85"><path d="M0.7 8.3 L1.1 6.2 L6.3 1 L8 2.7 L2.8 7.9 Z M5.4 1.9 L7.1 3.6 M1.3 6.5 L2.5 7.7"/></svg>
<div class="t" style="left:374px;top:222.9px;font-size:7.5px;color:#4d4d4d;letter-spacing:-0.35px">編集...</div>
<svg class="a" style="left:359px;top:calc(240.8px - 5px)" width="10" height="10" viewBox="0 0 10 10" fill="none" stroke="#666" stroke-width="0.9"><path d="M9.5 6 V9.5 H0.5 V0.5 H9.5 V3 M4 5.5 H8.5 M7 4 L8.5 5.5 L7 7"/></svg>
<div class="t" style="left:374px;top:237.6px;font-size:7.5px;color:#4d4d4d;letter-spacing:-0.35px">移動...</div>
<svg class="a" style="left:360px;top:249.8px" width="8" height="10" viewBox="0 0 8 10"><path d="M0.3 1.6 H7.7 V2.4 H0.3 Z M2.6 0.3 H5.4 V1.6 H2.6 Z" fill="#666"/><path d="M1.1 2.8 L1.5 9.6 H6.5 L6.9 2.8 Z" fill="#777"/><path d="M3 3.8 V8.5 M5 3.8 V8.5" stroke="#fff" stroke-width="0.7"/></svg>
<div class="t" style="left:374px;top:251.6px;font-size:7.5px;color:#4d4d4d;letter-spacing:-0.25px">削除</div>
<div class="a" style="left:358.5px;top:264px;width:91px;height:1px;background:#e6e6e6"></div>
<div class="t" style="left:359px;top:270.8px;font-size:7.5px;color:#444;font-weight:bold;letter-spacing:-0.35px">ポリシー適用</div>
<svg class="a" style="left:360px;top:calc(289.5px - 5px)" width="7" height="10" viewBox="0 0 7 10" fill="none" stroke="#aaa" stroke-width="0.9"><path d="M3.5 9.5 V0.8 M0.5 3.8 L3.5 0.8 L6.5 3.8"/></svg>
<div class="t" style="left:374px;top:286.3px;font-size:7.5px;color:#b3b3b3;letter-spacing:-0.25px">すぐに適用</div>
<svg class="a" style="left:360px;top:calc(303.9px - 5px)" width="7" height="10" viewBox="0 0 7 10" fill="none" stroke="#444" stroke-width="0.9"><path d="M3.5 0.5 V9.2 M0.5 6.2 L3.5 9.2 L6.5 6.2"/></svg>
<div class="t" style="left:374px;top:300.7px;font-size:7.5px;color:#4d4d4d;letter-spacing:-0.25px">後で適用</div>

<div class="a" style="left:456px;top:182.8px;width:113.5px;height:75px;background:#fff;border:1px solid #dadada;border-radius:2px;box-shadow:0 1px 3px rgba(0,0,0,0.12)"></div>
<svg class="a" style="left:465.5px;top:calc(191.0px - 5px)" width="9" height="9" viewBox="0 0 9 9" fill="none" stroke="#606060" stroke-width="0.85"><circle cx="5.3" cy="3.7" r="3"/><path d="M3.2 5.8 L0.6 8.4"/></svg>
<div class="t" style="left:479.5px;top:187.8px;font-size:7.5px;color:#777;letter-spacing:-0.05px">検査</div>
<svg class="a" style="left:556px;top:188.0px" width="4" height="6" viewBox="0 0 4 6" fill="none" stroke="#888" stroke-width="0.8"><path d="M0.5 0.7 L3.5 3 L0.5 5.3 Z"/></svg>
<svg class="a" style="left:465.5px;top:calc(205.3px - 4.5px)" width="9" height="9" viewBox="0 0 9 9" fill="none" stroke="#606060" stroke-width="0.85"><path d="M7.8 3.2 A3.6 3.6 0 0 0 1.2 3 M1.2 5.8 A3.6 3.6 0 0 0 7.8 6 M6.6 3.2 H8.2 V1.6 M2.4 5.8 H0.8 V7.4"/></svg>
<div class="t" style="left:479.5px;top:202.1px;font-size:7.5px;color:#8f8f8f;letter-spacing:-0.05px">アップデート</div>
<svg class="a" style="left:556px;top:202.3px" width="4" height="6" viewBox="0 0 4 6" fill="none" stroke="#888" stroke-width="0.8"><path d="M0.5 0.7 L3.5 3 L0.5 5.3 Z"/></svg>
<svg class="a" style="left:466px;top:calc(220.0px - 4.5px)" width="8" height="9" viewBox="0 0 8 9" fill="none" stroke="#606060" stroke-width="0.85"><path d="M0.7 0.7 L7.2 4.5 L0.7 8.3 Z"/></svg>
<div class="t" style="left:479.5px;top:216.8px;font-size:7.5px;color:#777;letter-spacing:-0.25px">タスクの実行...</div>
<div class="a" style="left:458px;top:228.2px;width:110px;height:13.6px;background:#ebedf0"></div>
<svg class="a" style="left:465.5px;top:calc(235.6px - 4.5px)" width="9" height="9" viewBox="0 0 9 9" stroke="#4aa3df" stroke-width="0.8"><path d="M4.5 0.5 V8.5 M0.5 4.5 H8.5"/></svg>
<div class="t" style="left:479.5px;top:232.4px;font-size:7.5px;color:#4aa3df;letter-spacing:-0.25px">新規タスク...</div>
<svg class="a" style="left:465.5px;top:calc(249.5px - 4.5px)" width="9" height="9" viewBox="0 0 9 9" fill="none" stroke="#606060" stroke-width="0.85"><path d="M1.2 2.8 A3.8 3.8 0 1 1 0.8 5 M0.8 1 V3 H2.8 M4.5 2.5 V4.7 L6 5.8"/></svg>
<div class="t" style="left:479.5px;top:246.3px;font-size:7.5px;color:#777;letter-spacing:-0.55px">最近実行したタスク</div>
<svg class="a" style="left:556px;top:246.5px" width="4" height="6" viewBox="0 0 4 6" fill="none" stroke="#888" stroke-width="0.8"><path d="M0.5 0.7 L3.5 3 L0.5 5.3 Z"/></svg>
</div></body></html>
